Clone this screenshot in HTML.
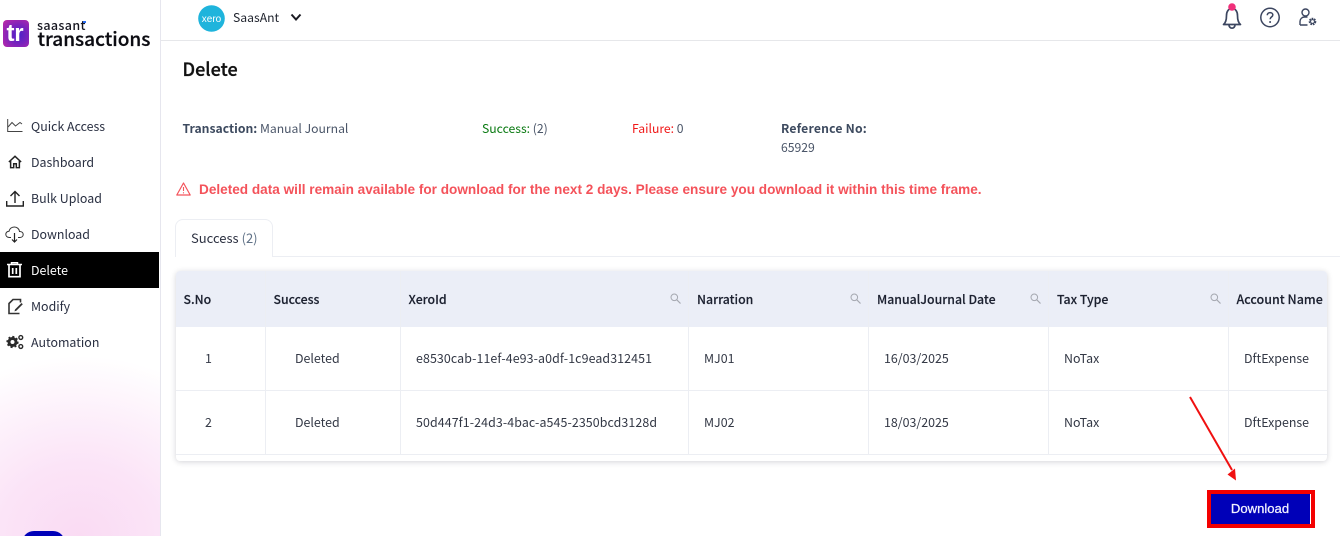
<!DOCTYPE html>
<html><head><meta charset="utf-8"><style>
*{box-sizing:border-box}
html,body{margin:0;padding:0;width:1340px;height:536px;overflow:hidden;background:#fff}
body{position:relative;font-family:"Noto Sans CJK SC","Liberation Sans",sans-serif;font-size:12.2px;color:#2b2f3a}
.t{position:absolute;white-space:nowrap;line-height:20px;height:20px}
.b{position:absolute}
.nav{font-size:12.4px;color:#2a3042;left:31px}
.th{font-size:12.3px;font-weight:500;color:#1c2130;-webkit-text-stroke:.15px #1c2130}
.td{font-size:12.4px;color:#333845}
.v{position:absolute;width:1px;background:#eceef3}
.h{position:absolute;height:1px;background:#eceef3}
.i{position:absolute;overflow:visible;fill:none}
.lib{font-family:"Liberation Sans",sans-serif}
</style></head><body>
<!-- sidebar -->
<div class="b" style="left:0;top:355px;width:160px;height:181px;background:radial-gradient(ellipse 200px 180px at 80px 181px,#fadbf3 0%,#fbe4f7 40%,#fdf1fb 70%,#fff 100%)"></div>
<div class="b" style="left:160px;top:0;width:1px;height:536px;background:#e6e6ee"></div>
<div class="b" style="left:161px;top:40px;width:1179px;height:1px;background:#e6e7ea"></div>
<div class="b" style="left:22px;top:531px;width:43px;height:12px;border-radius:14px 14px 0 0;background:#0000b8"></div>

<!-- logo -->
<div class="b" style="left:3px;top:20px;width:26px;height:27px;border-radius:4px;background:radial-gradient(circle at 60% 55%,#4a22c8 0%,#7a22bc 45%,#c42aa6 100%)"></div>
<div class="t lib" style="left:6.5px;top:24px;font-size:24px;font-weight:700;color:#fff;letter-spacing:-.2px">tr</div>
<div class="t" style="left:37px;top:15px;font-size:12.5px;font-weight:500;color:#15151f;letter-spacing:.35px">saasant</div>
<div class="b" style="left:83px;top:21px;width:3px;height:1.5px;background:#2a6cf0"></div>
<div class="t" style="left:37.5px;top:28px;font-size:19px;font-weight:500;color:#0c0c12;-webkit-text-stroke:.25px #0c0c12;line-height:22px;height:22px">transactions</div>

<!-- top bar -->
<svg class="i" style="left:198px;top:5px" width="27" height="27" viewBox="0 0 27 27"><circle cx="13.5" cy="13.5" r="13.3" fill="#1fb4dc"/><text x="13.5" y="17" font-size="10" text-anchor="middle" fill="#fff" font-family="Liberation Sans">xero</text></svg>
<div class="t" style="left:233px;top:7px;font-size:12.2px;color:#20242e">SaasAnt</div>
<svg class="i" style="left:290px;top:13px" width="12" height="9" viewBox="0 0 12 9"><path d="M1.5 1.5 6 6.5 10.5 1.5" stroke="#1a1a22" stroke-width="2"/></svg>
<svg class="i" style="left:1220px;top:2px" width="24" height="28" viewBox="0 0 24 28"><path d="M3.5 22.5c2-1.500 3-4 3-9C6.5 9.500 8.500 6.500 12 6.500s5.500 3 5.500 7c0 5 1 7.500 3 9z" stroke="#3c4660" stroke-width="1.700" stroke-linejoin="round"/><path d="M9 23a3 3.200 0 0 0 6 0" stroke="#3c4660" stroke-width="1.700"/><circle cx="12" cy="5" r="3.800" fill="#f0307a"/></svg>
<svg class="i" style="left:1260px;top:7px" width="20" height="20" viewBox="0 0 20 20"><circle cx="10" cy="10.500" r="9.200" stroke="#3c4660" stroke-width="1.500"/><path d="M7.300 8.300c0-1.600 1.200-2.700 2.800-2.700s2.700 1 2.700 2.400c0 2-2.700 2-2.700 4.200" stroke="#3c4660" stroke-width="1.500"/><circle cx="10.100" cy="15" r="1" fill="#3c4660"/></svg>
<svg class="i" style="left:1299px;top:8px" width="18" height="18" viewBox="0 0 18 18"><circle cx="6.500" cy="4.500" r="3.500" stroke="#3c4660" stroke-width="1.400"/><path d="M1 17v-3.500c0-2.500 2-4.500 4.500-4.500H8.500M1 17h7.500" stroke="#3c4660" stroke-width="1.400"/><circle cx="13.500" cy="13.500" r="2.800" stroke="#3c4660" stroke-width="2" stroke-dasharray="1.600 .8"/><circle cx="13.500" cy="13.500" r="1.900" stroke="#3c4660" stroke-width="1"/></svg>

<!-- nav -->
<div class="b" style="left:0;top:252px;width:159px;height:36px;background:#000"></div>
<div class="t nav" style="top:116px">Quick Access</div>
<div class="t nav" style="top:152px">Dashboard</div>
<div class="t nav" style="top:188px">Bulk Upload</div>
<div class="t nav" style="top:224px">Download</div>
<div class="t nav" style="top:260px;color:#fff">Delete</div>
<div class="t nav" style="top:296px">Modify</div>
<div class="t nav" style="top:332px">Automation</div>
<svg class="i" style="left:7px;top:119px" width="16" height="14" viewBox="0 0 16 14"><path d="M.7 0v12.500H15.500" stroke="#444" stroke-width="1"/><path d="M1 8l4-4.500L8.500 7 13 3.500l2 1.500" stroke="#444" stroke-width="1"/></svg>
<svg class="i" style="left:8px;top:155px" width="14" height="14" viewBox="0 0 16 15"><path d="M1 7.500 8 1l7 6.500M3 6v8h3.500V9.500h3V14H13V6" stroke="#222" stroke-width="1.700"/></svg>
<svg class="i" style="left:6px;top:190px" width="18" height="17" viewBox="0 0 18 17"><path d="M9 13V1.500M4.500 6 9 1.500 13.500 6M.7 11v5h16.600v-5" stroke="#222" stroke-width="1.400"/></svg>
<svg class="i" style="left:5px;top:226px" width="19" height="17" viewBox="0 0 19 17"><path d="M6 11.500H4.500C2 11.500.8 10 .8 8.300S2.200 5.200 4 5.200C4.500 2.700 6.700 1 9.300 1c2.800 0 5 2 5.200 4.500 2.200 0 3.700 1.200 3.700 3s-1.500 3-3.500 3H13" stroke="#333" stroke-width="1"/><path d="M9.500 7v9M7 13.500l2.500 2.500 2.500-2.500" stroke="#222" stroke-width="1.200"/></svg>
<svg class="i" style="left:7px;top:262px" width="15" height="16" viewBox="0 0 15 16"><path d="M0 2.500h15M4.500 2V.8h6V2" stroke="#fff" stroke-width="1.500"/><path d="M2 3v11.700h11V3" stroke="#fff" stroke-width="1.700"/><path d="M5.700 6v6M9.300 6v6" stroke="#fff" stroke-width="1.700"/></svg>
<svg class="i" style="left:7px;top:298px" width="17" height="17" viewBox="0 0 17 17"><path d="M12.500 15.500H2V5.500L6 1.500h7.500v3" stroke="#333" stroke-width="1.600"/><path d="M8 11.500l6.500-6.500 1.300 1.300-6.500 6.500-1.800.6z" fill="#333"/></svg>
<svg class="i" style="left:6px;top:334px" width="18" height="16" viewBox="0 0 18 16"><circle cx="6.500" cy="8" r="3.500" stroke="#2a2a2a" stroke-width="3"/><circle cx="6.500" cy="8" r="5.300" stroke="#2a2a2a" stroke-width="1.600" stroke-dasharray="2 2.100"/><circle cx="14.800" cy="3.500" r="1.900" stroke="#2a2a2a" stroke-width="1.400"/><circle cx="14.800" cy="12.500" r="1.900" stroke="#2a2a2a" stroke-width="1.400"/></svg>

<!-- content -->
<div class="t" style="left:182.5px;top:58px;font-size:18px;font-weight:500;color:#111;-webkit-text-stroke:.3px #111;line-height:22px;height:22px">Delete</div>
<div class="t" style="left:182.5px;top:118px;color:#4a5568"><span style="font-weight:700;color:#3d4a5f">Transaction:</span> Manual Journal</div>
<div class="t" style="left:482px;top:118px;color:#4a5568"><span style="color:#0a7a12">Success:</span> (2)</div>
<div class="t" style="left:632px;top:118px;color:#4a5568"><span style="color:#f01818">Failure:</span> 0</div>
<div class="t" style="left:781px;top:118px;font-weight:700;color:#3d4a5f;letter-spacing:.2px">Reference No:</div>
<div class="t" style="left:781px;top:137px;color:#4a5568">65929</div>
<svg class="i" style="left:176px;top:182px" width="15" height="14" viewBox="0 0 15 14"><path d="M7.500 1 14.200 13H.8z" stroke="#f4545c" stroke-width="1.200" stroke-linejoin="round"/><path d="M7.500 5v4M7.500 10.200v1.200" stroke="#f4545c" stroke-width="1.100"/></svg>
<div class="t lib" style="left:199px;top:180px;font-size:13.6px;font-weight:700;color:#f4525a">Deleted data will remain available for download for the next 2 days. Please ensure you download it within this time frame.</div>

<!-- tab -->
<div class="h" style="left:175px;top:256px;width:1165px"></div>
<div class="b" style="left:175px;top:219px;width:98px;height:38px;background:#fff;border:1px solid #eceef3;border-bottom:0;border-radius:8px 8px 0 0"></div>
<div class="t" style="left:191px;top:228px;font-size:13px;color:#2b3040">Success <span style="color:#5f7186">(2)</span></div>

<!-- table -->
<div class="b" style="left:176px;top:271px;width:1151px;height:190px;background:#fff;border-radius:4px;box-shadow:0 1px 6px rgba(40,40,60,.2)"></div>
<div class="b" style="left:176px;top:271px;width:1151px;height:56px;background:#ebeef7;border-radius:4px 4px 0 0"></div>
<div class="h" style="left:176px;top:390px;width:1151px"></div>
<div class="h" style="left:176px;top:454px;width:1151px"></div>
<div class="v" style="left:265px;top:271px;height:184px"></div>
<div class="v" style="left:400px;top:271px;height:184px"></div>
<div class="v" style="left:688px;top:271px;height:184px"></div>
<div class="v" style="left:868px;top:271px;height:184px"></div>
<div class="v" style="left:1048px;top:271px;height:184px"></div>
<div class="v" style="left:1228px;top:271px;height:184px"></div>

<div class="t th" style="left:183.5px;top:289px">S.No</div>
<div class="t th" style="left:273.5px;top:289px">Success</div>
<div class="t th" style="left:408.5px;top:289px">XeroId</div>
<div class="t th" style="left:697px;top:289px">Narration</div>
<div class="t th" style="left:877px;top:289px">ManualJournal Date</div>
<div class="t th" style="left:1057px;top:289px">Tax Type</div>
<div class="t th" style="left:1236.5px;top:289px;font-size:12.5px">Account Name</div>

<svg class="i" style="left:670px;top:293px" width="11" height="11" viewBox="0 0 11 11"><circle cx="4.300" cy="4.300" r="3.300" stroke="#a5a8b0"/><path d="M6.800 6.800 10.500 10.500" stroke="#a5a8b0" stroke-width="1.200"/></svg>
<svg class="i" style="left:850px;top:293px" width="11" height="11" viewBox="0 0 11 11"><circle cx="4.300" cy="4.300" r="3.300" stroke="#a5a8b0"/><path d="M6.800 6.800 10.500 10.500" stroke="#a5a8b0" stroke-width="1.200"/></svg>
<svg class="i" style="left:1030px;top:293px" width="11" height="11" viewBox="0 0 11 11"><circle cx="4.300" cy="4.300" r="3.300" stroke="#a5a8b0"/><path d="M6.800 6.800 10.500 10.500" stroke="#a5a8b0" stroke-width="1.200"/></svg>
<svg class="i" style="left:1210px;top:293px" width="11" height="11" viewBox="0 0 11 11"><circle cx="4.300" cy="4.300" r="3.300" stroke="#a5a8b0"/><path d="M6.800 6.800 10.500 10.500" stroke="#a5a8b0" stroke-width="1.200"/></svg>

<div class="t td" style="left:205px;top:348px">1</div>
<div class="t td" style="left:295px;top:348px">Deleted</div>
<div class="t td" style="left:416px;top:348px;letter-spacing:.1px">e8530cab-11ef-4e93-a0df-1c9ead312451</div>
<div class="t td" style="left:704px;top:348px">MJ01</div>
<div class="t td" style="left:884px;top:348px">16/03/2025</div>
<div class="t td" style="left:1064px;top:348px">NoTax</div>
<div class="t td" style="left:1244px;top:348px">DftExpense</div>
<div class="t td" style="left:205px;top:412px">2</div>
<div class="t td" style="left:295px;top:412px">Deleted</div>
<div class="t td" style="left:416px;top:412px;letter-spacing:.1px">50d447f1-24d3-4bac-a545-2350bcd3128d</div>
<div class="t td" style="left:704px;top:412px">MJ02</div>
<div class="t td" style="left:884px;top:412px">18/03/2025</div>
<div class="t td" style="left:1064px;top:412px">NoTax</div>
<div class="t td" style="left:1244px;top:412px">DftExpense</div>

<!-- arrow and button -->
<svg class="i" style="left:1180px;top:390px" width="70" height="95" viewBox="0 0 70 95"><path d="M10 7 52 80" stroke="#f01010" stroke-width="2"/><path d="M56 90.500 47.500 84.500 55 78.500z" fill="#f01010"/></svg>
<div class="b" style="left:1207px;top:490px;width:108px;height:38px;background:#0000b8;border:4px solid #f40000"></div>
<div class="b" style="left:1310px;top:494px;width:1px;height:30px;background:#fff"></div>
<div class="t lib" style="left:1207px;top:498.5px;width:106px;text-align:center;font-size:13.1px;color:#f2f2ff;-webkit-text-stroke:.25px #f2f2ff">Download</div>
</body></html>
